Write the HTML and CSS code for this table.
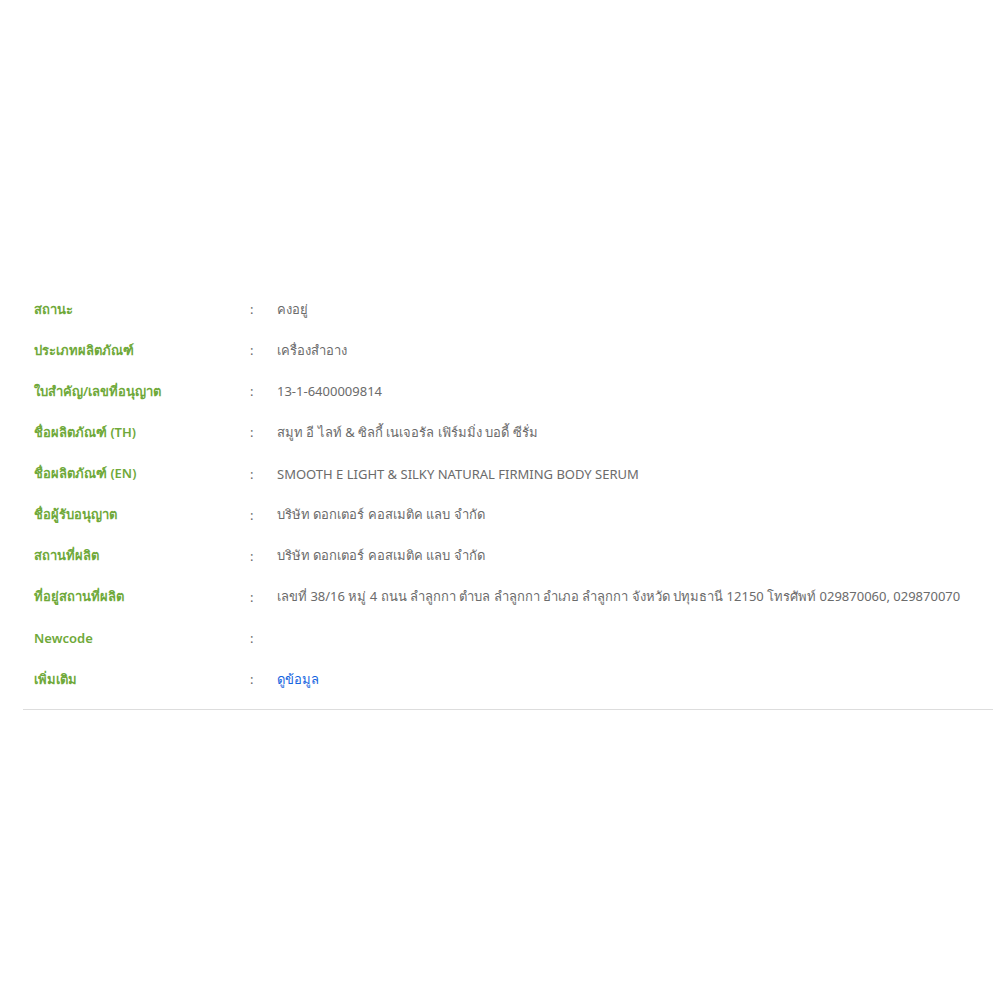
FILE: index.html
```html
<!DOCTYPE html>
<html lang="th">
<head>
<meta charset="utf-8">
<title>ข้อมูลผลิตภัณฑ์</title>
<link rel="stylesheet" href="styles.css">
</head>
<body>
<main class="page">
  <section class="details">
    <div class="row"><div class="label">สถานะ</div><div class="sep">:</div><div class="value">คงอยู่</div></div>
    <div class="row"><div class="label">ประเภทผลิตภัณฑ์</div><div class="sep">:</div><div class="value">เครื่องสำอาง</div></div>
    <div class="row"><div class="label">ใบสำคัญ/เลขที่อนุญาต</div><div class="sep">:</div><div class="value">13-1-6400009814</div></div>
    <div class="row"><div class="label">ชื่อผลิตภัณฑ์ (TH)</div><div class="sep">:</div><div class="value">สมูท อี ไลท์ &amp; ซิลกี้ เนเจอรัล เฟิร์มมิ่ง บอดี้ ซีรั่ม</div></div>
    <div class="row"><div class="label">ชื่อผลิตภัณฑ์ (EN)</div><div class="sep">:</div><div class="value">SMOOTH E LIGHT &amp; SILKY NATURAL FIRMING BODY SERUM</div></div>
    <div class="row"><div class="label">ชื่อผู้รับอนุญาต</div><div class="sep">:</div><div class="value">บริษัท ดอกเตอร์ คอสเมติค แลบ จำกัด</div></div>
    <div class="row"><div class="label">สถานที่ผลิต</div><div class="sep">:</div><div class="value">บริษัท ดอกเตอร์ คอสเมติค แลบ จำกัด</div></div>
    <div class="row"><div class="label">ที่อยู่สถานที่ผลิต</div><div class="sep">:</div><div class="value">เลขที่ 38/16 หมู่ 4 ถนน ลำลูกกา ตำบล ลำลูกกา อำเภอ ลำลูกกา จังหวัด ปทุมธานี 12150 โทรศัพท์ 029870060, 029870070</div></div>
    <div class="row"><div class="label">Newcode</div><div class="sep">:</div><div class="value"></div></div>
    <div class="row"><div class="label">เพิ่มเติม</div><div class="sep">:</div><div class="value"><a class="link" href="#">ดูข้อมูล</a></div></div>
  </section>
</main>
</body>
</html>
```
FILE: styles.css
```css
html, body {
  margin: 0;
  padding: 0;
  background: #ffffff;
}
body {
  font-family: "Noto Sans", "Open Sans", sans-serif;
  font-size: 13px;
  color: #6b6b6b;
}
.page {
  padding: 288.6px 5px 0 23px;
}
.details {
  border-bottom: 1px solid #dddddd;
  padding-bottom: 9.4px;
}
.row {
  display: grid;
  grid-template-columns: 216px 27px 1fr;
  height: 41.12px;
  align-items: center;
  padding-left: 11px;
}
.label {
  color: #6fa93a;
  font-weight: 600;
  white-space: nowrap;
}
.sep {
  color: #6b6b6b;
}
.value {
  white-space: nowrap;
}
.link {
  color: #1565e0;
  text-decoration: none;
}
```
